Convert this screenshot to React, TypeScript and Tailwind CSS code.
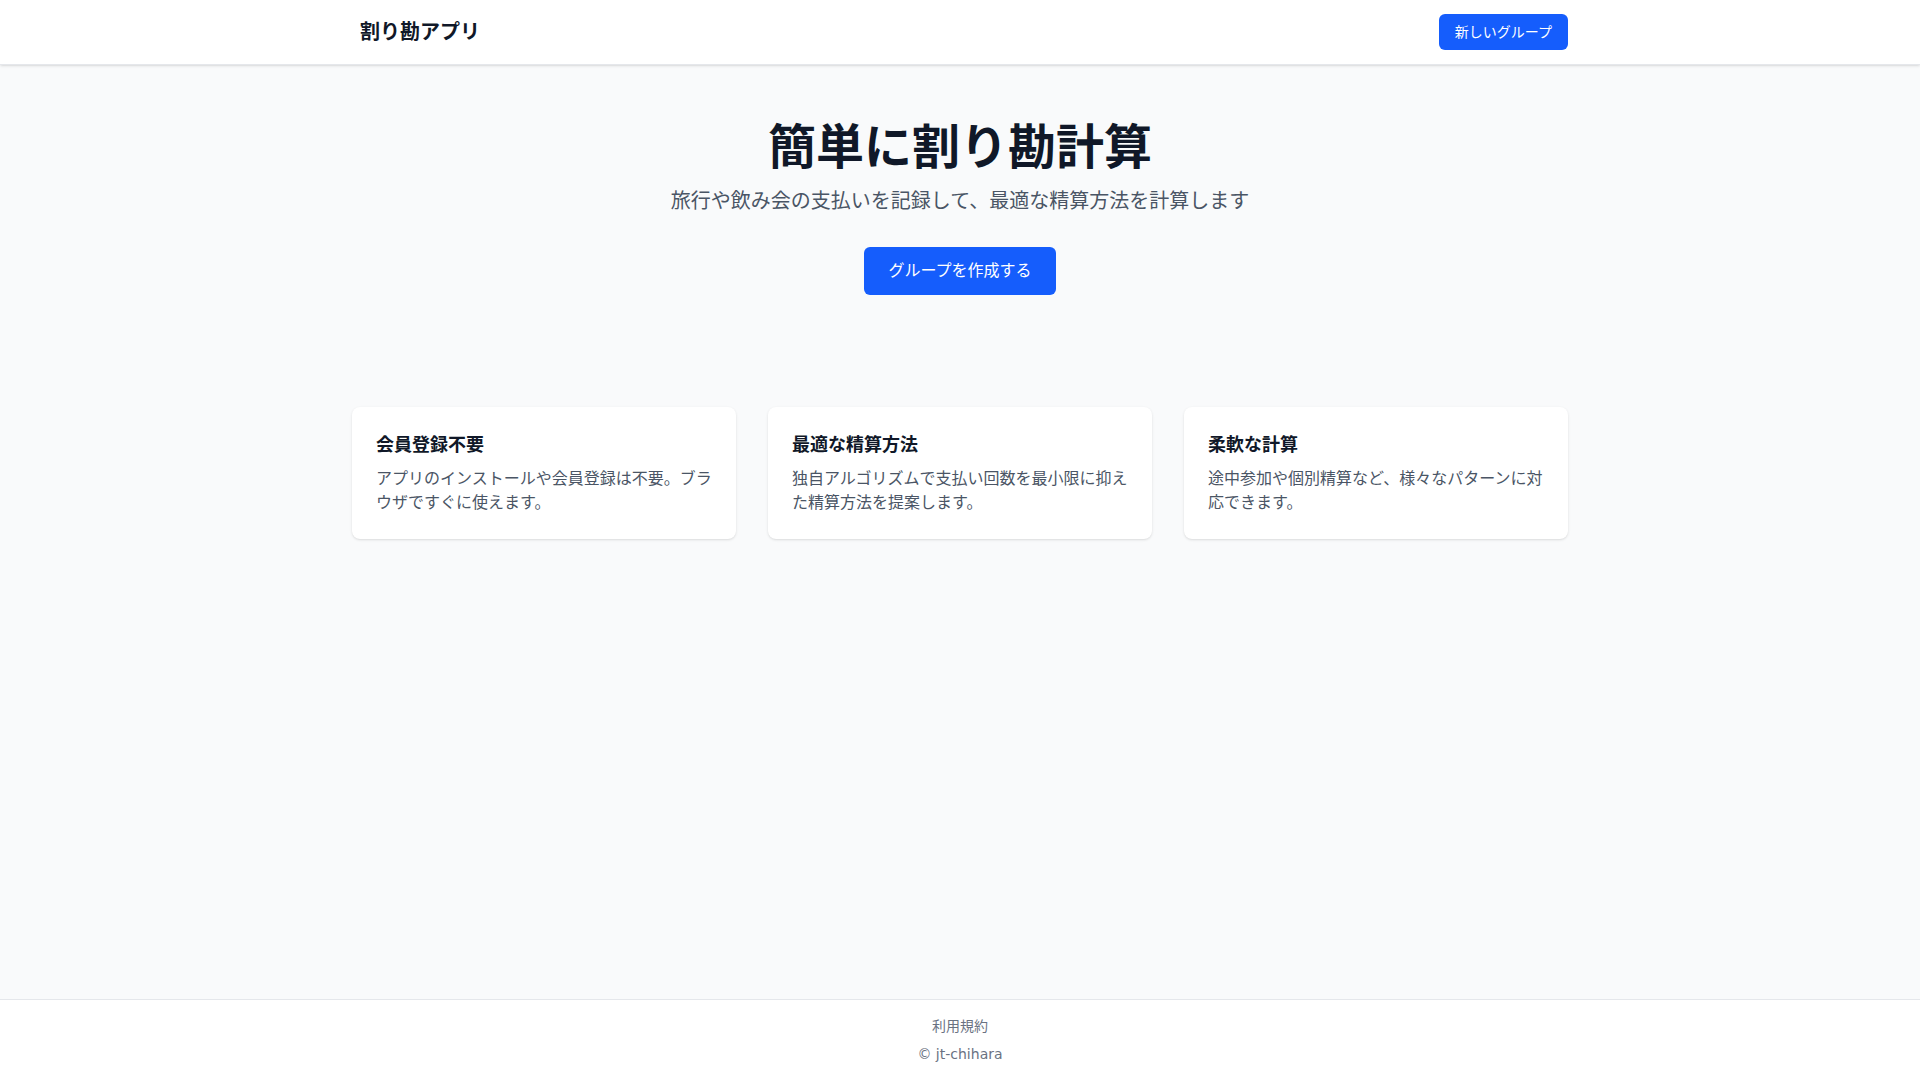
const features = [
  {
    title: "会員登録不要",
    body: "アプリのインストールや会員登録は不要。ブラウザですぐに使えます。",
  },
  {
    title: "最適な精算方法",
    body: "独自アルゴリズムで支払い回数を最小限に抑えた精算方法を提案します。",
  },
  {
    title: "柔軟な計算",
    body: "途中参加や個別精算など、様々なパターンに対応できます。",
  },
];

export default function App() {
  return (
    <div
      className="flex min-h-screen flex-col bg-gray-50 text-gray-900"
      style={{ fontFamily: '"DejaVu Sans", "Noto Sans CJK JP", sans-serif' }}
    >
      <header className="border-b border-gray-200 bg-white shadow-sm">
        <div className="mx-auto flex h-16 max-w-7xl items-center justify-between px-8">
          <span className="pl-2 text-xl font-bold">割り勘アプリ</span>
          <button className="rounded-md bg-blue-600 px-4 py-2 text-sm text-white">
            新しいグループ
          </button>
        </div>
      </header>

      <main className="mx-auto w-full max-w-7xl flex-1 px-8">
        <section className="pt-[58px] text-center">
          <h1 className="text-5xl font-bold text-gray-900">簡単に割り勘計算</h1>
          <p className="mt-4 text-xl text-gray-600">
            旅行や飲み会の支払いを記録して、最適な精算方法を計算します
          </p>
          <button className="mt-8 rounded-md bg-blue-600 px-6 py-3 text-base text-white">
            グループを作成する
          </button>
        </section>

        <section className="mt-28 grid grid-cols-3 gap-8">
          {features.map((f) => (
            <div key={f.title} className="rounded-lg bg-white p-6 shadow-sm">
              <h3 className="text-lg font-bold">{f.title}</h3>
              <p className="mt-2 text-base leading-6 text-gray-600">{f.body}</p>
            </div>
          ))}
        </section>
      </main>

      <footer className="border-t border-gray-200 bg-white py-4 text-center text-sm text-gray-500">
        <div>利用規約</div>
        <div className="mt-2">© jt-chihara</div>
      </footer>
    </div>
  );
}
